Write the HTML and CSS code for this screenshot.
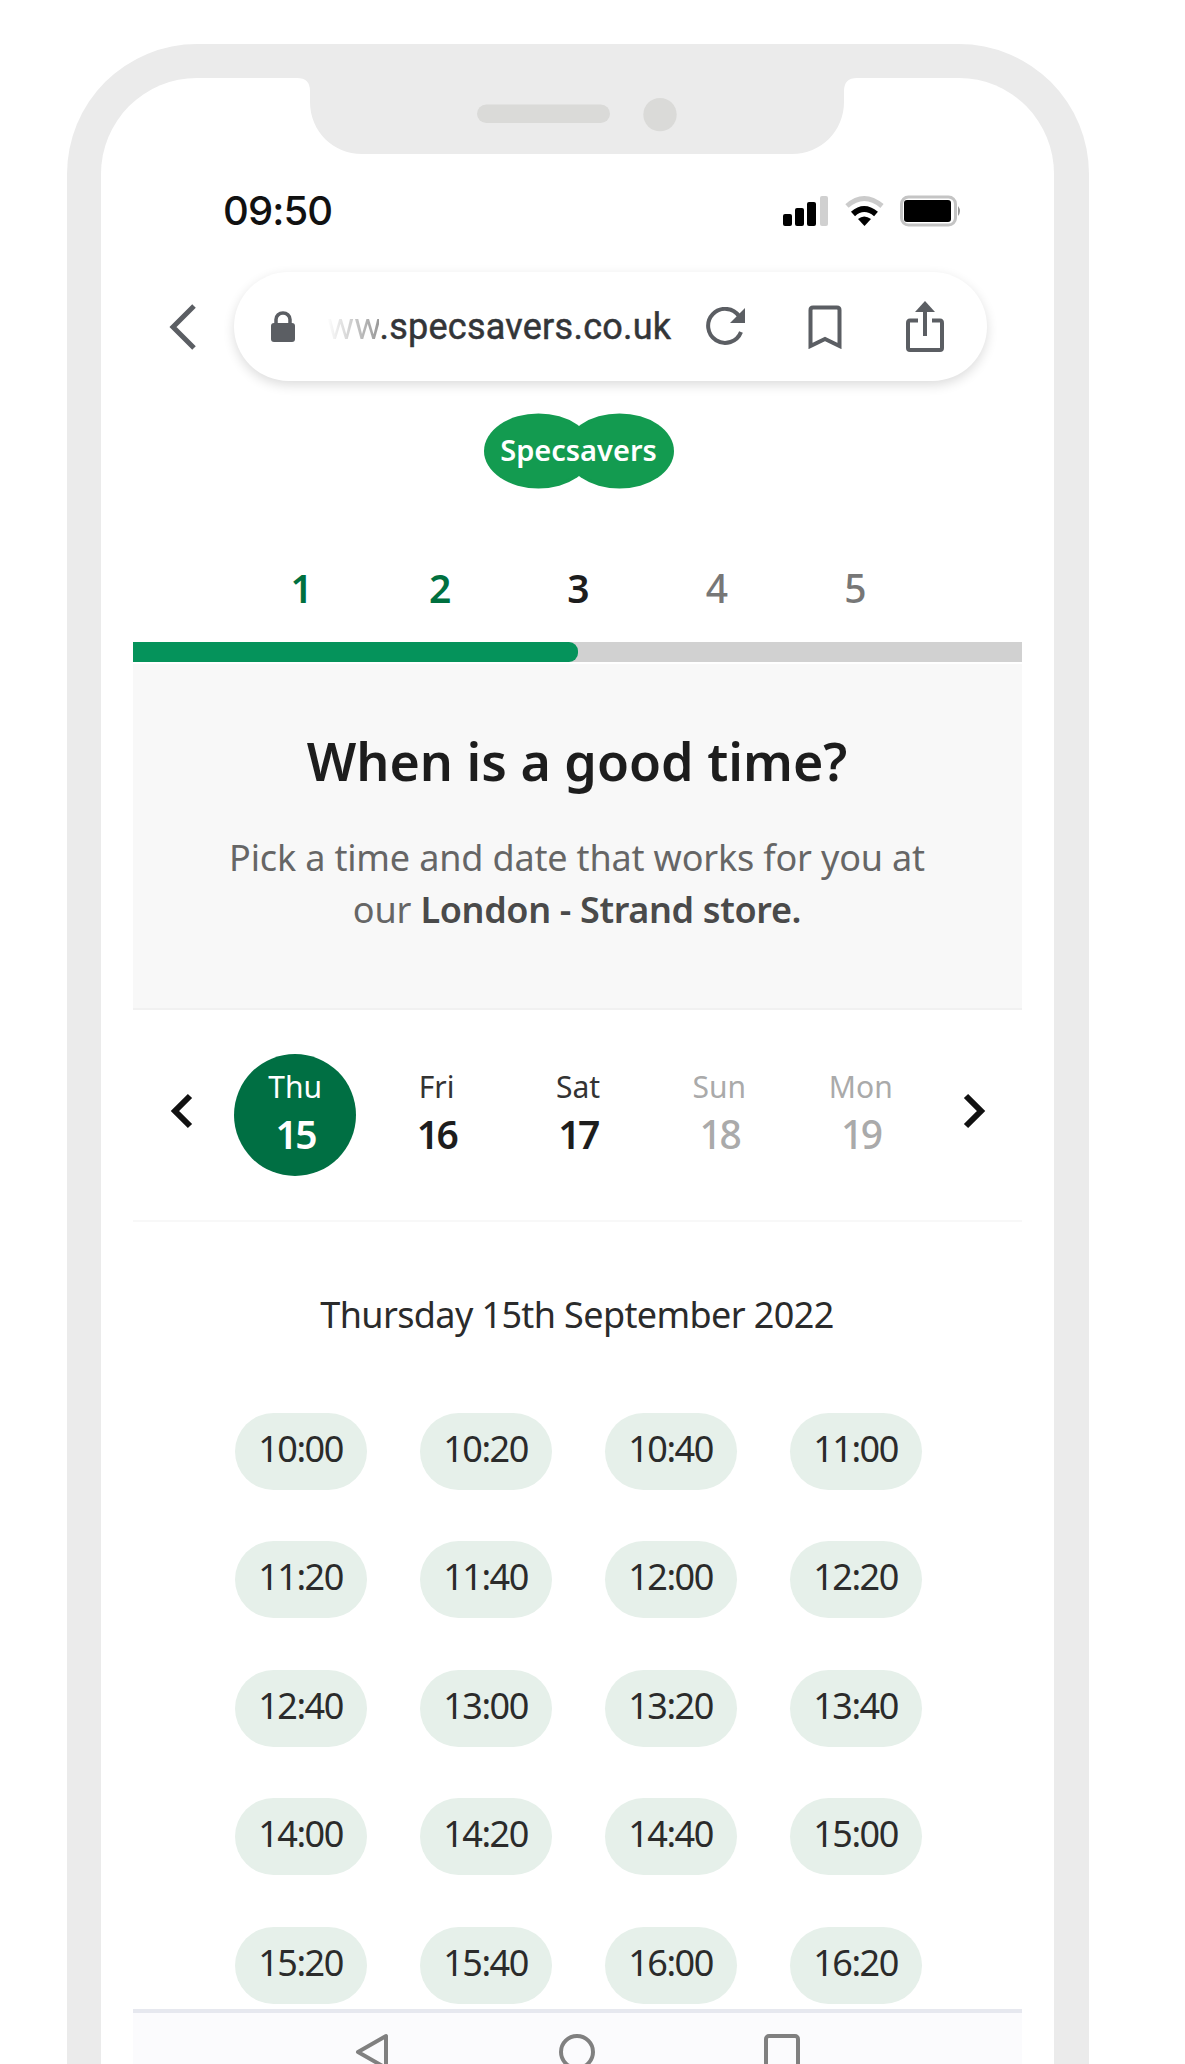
FILE: index.html
```html
<!DOCTYPE html>
<html lang="en">
<head>
<meta charset="utf-8">
<title>Specsavers booking</title>
<link rel="stylesheet" href="styles.css">
</head>
<body>
<main class="phone">
  <svg class="notch" width="560" height="78" viewBox="0 0 560 78" aria-hidden="true">
    <path d="M0 0V1Q13 1 13 14V25C13 54 36 77 65 77H495C524 77 547 54 547 25V14Q547 1 560 1V0Z" fill="#ebebeb"/>
    <rect x="180" y="27.500" width="133" height="18.500" rx="9.200" fill="#dadad8"/>
    <circle cx="363" cy="37.600" r="16.700" fill="#dadad8"/>
  </svg>
  <header class="status">
    <span class="clock">09:50</span>
    <svg class="indicators" width="182" height="36" viewBox="0 0 182 36" aria-hidden="true">
      <rect x="1" y="21" width="9" height="12" rx="2"/>
      <rect x="13" y="15" width="9" height="18" rx="2"/>
      <rect x="25" y="9" width="9" height="24" rx="2"/>
      <rect x="38" y="3" width="8" height="30" rx="2" fill="#d0d0d0"/>
      <g fill="none">
        <path d="M65 13Q82 -2 100 13" stroke="#cbcbcb" stroke-width="5"/>
        <path d="M71 21Q82 11 94 21" stroke="#000" stroke-width="6"/>
      </g>
      <path d="M76 26Q82 21 89 26L82.500 33Z"/>
      <rect x="119.500" y="4" width="54" height="28" rx="7" fill="#fff" stroke="#c4c4c4" stroke-width="3"/>
      <rect x="122" y="7" width="47" height="22" rx="3"/>
      <path d="M176 13Q180 18 176 23Z" fill="#999"/>
    </svg>
  </header>
  <nav class="browser">
    <svg class="back" width="30" height="48" viewBox="0 0 30 48"><path d="M26 3L5 24L26 45" fill="none" stroke="#5b5e63" stroke-width="5"/></svg>
    <div class="address">
      <svg class="lock" width="24" height="32" viewBox="0 0 24 32"><rect x="0" y="12" width="24" height="19" rx="3" fill="#5b5e63"/><path d="M5 13V8.500a7 6.500 0 0 1 14 0V13" fill="none" stroke="#5b5e63" stroke-width="3.500"/></svg>
      <span class="url"><span class="fade">ww</span>.specsavers.co.uk</span>
      <svg class="reload" width="40" height="40" viewBox="0 0 40 40"><path d="M35 25A17 17 0 1 1 33 9" fill="none" stroke="#5b5e63" stroke-width="4"/><path d="M39 1V16H24Z" fill="#5b5e63"/></svg>
      <svg class="bookmark" width="34" height="44" viewBox="0 0 34 44"><path d="M2.500 41V5Q2.500 2.500 5 2.500H29Q31.500 2.500 31.500 5V41L17 34Z" fill="none" stroke="#5b5e63" stroke-width="4"/></svg>
      <svg class="share" width="40" height="52" viewBox="0 0 40 52"><path d="M13 19.500H5Q3 19.500 3 22V47Q3 49 5 49H35Q37 49 37 47V22Q37 19.500 35 19.500H27M20 35V6" fill="none" stroke="#5b5e63" stroke-width="4"/><path d="M20 0L30 11H10Z" fill="#5b5e63"/></svg>
    </div>
  </nav>
  <section class="page">
    <div class="brand"><div class="logo"><svg class="lenses" width="190" height="76" viewBox="0 0 190 76"><ellipse cx="54.500" cy="38" rx="54.500" ry="37.500"/><ellipse cx="135.500" cy="38" rx="54.500" ry="37.500"/><path d="M80 8L95 15L110 8V68L95 61L80 68Z"/></svg><span>Specsavers</span></div></div>
    <ol class="steps"><li class="done">1</li><li class="done">2</li><li class="now">3</li><li>4</li><li>5</li></ol>
    <div class="track"><div class="progress"></div></div>
    <div class="intro">
      <h1>When is a good time?</h1>
      <p>Pick a time and date that works for you at<br>our <b>London - Strand store.</b></p>
    </div>
    <div class="dates">
      <svg class="arrow" width="24" height="36" viewBox="0 0 24 36"><path d="M20 3L5 18L20 33" /></svg>
      <div class="days">
        <div class="day chosen"><span>Thu</span><b>15</b></div>
        <div class="day"><span>Fri</span><b>16</b></div>
        <div class="day"><span>Sat</span><b>17</b></div>
        <div class="day off"><span>Sun</span><b>18</b></div>
        <div class="day off"><span>Mon</span><b>19</b></div>
      </div>
      <svg class="arrow" width="24" height="36" viewBox="0 0 24 36"><path d="M4 3L19 18L4 33" /></svg>
    </div>
    <h2>Thursday 15th September 2022</h2>
    <div class="times">
      <span>10:00</span><span>10:20</span><span>10:40</span><span>11:00</span>
      <span>11:20</span><span>11:40</span><span>12:00</span><span>12:20</span>
      <span>12:40</span><span>13:00</span><span>13:20</span><span>13:40</span>
      <span>14:00</span><span>14:20</span><span>14:40</span><span>15:00</span>
      <span>15:20</span><span>15:40</span><span>16:00</span><span>16:20</span>
    </div>
  </section>
  <footer class="system">
    <svg width="36" height="38" viewBox="0 0 36 38"><path d="M32 3V35L4 19Z"/></svg>
    <svg width="36" height="38" viewBox="0 0 36 38"><circle cx="18" cy="19" r="16"/></svg>
    <svg width="36" height="38" viewBox="0 0 36 38"><rect x="2" y="3" width="32" height="32" rx="3"/></svg>
  </footer>
</main>
</body>
</html>
```
FILE: styles.css
```css
* { box-sizing: border-box; }
body { margin: 0; height: 2064px; padding: 44px 0 0 67px; overflow: hidden; background: #fff; font-family: "Noto Sans", sans-serif; color: #222; }
svg { display: block; flex: none; }
.phone { position: relative; width: 1021.500px; height: 2020px; border: solid #ebebeb; border-width: 34px 35px 0 34.500px; border-radius: 130px 130px 0 0; }
.notch { position: absolute; left: 196px; top: -1px; }
.status { height: 194px; padding: 115px 90px 0 120px; display: flex; justify-content: space-between; align-items: flex-start; }
.clock { font: 500 40px/36px Inter, sans-serif; color: #111; letter-spacing: -0.900px; margin: 0 0 0 2px; }
.browser { height: 109px; padding: 0 67px 0 67px; display: flex; align-items: center; gap: 36px; }
.address { flex: 1; height: 109px; border-radius: 55px; display: flex; align-items: center; padding-left: 37px; box-shadow: 0 4px 12px rgba(0,0,0,.14); }
.url { font: 400 36px/44px Roboto, sans-serif; width: 343px; margin-left: 32px; margin-right: 36px; padding-top: 1px; letter-spacing: .25px; white-space: nowrap; color: #333538; -webkit-text-stroke: .5px; }
.fade { background: linear-gradient(90deg, #fff, #999); background-clip: text; -webkit-background-clip: text; color: transparent; -webkit-text-stroke: 0; }
.bookmark { margin-left: 62px; }
.share { margin-left: 63px; }
.page { width: 889px; margin-left: 31.500px; }
.brand { height: 161px; padding: 32px 0 0 3px; display: flex; justify-content: center; }
.logo { display: grid; place-items: center; width: 190px; height: 76px; }
.logo > * { grid-area: 1 / 1; }
.lenses { fill: #139b50; }
.logo span { z-index: 1; color: #fff; font-size: 29px; font-weight: 600; line-height: 32px; padding-bottom: 2px; }
.steps { list-style: none; margin: 0; height: 100px; padding: 19px 97px 0 100px; display: grid; grid-template-columns: repeat(5, 1fr); text-align: center; font-size: 39px; line-height: 54px; font-weight: 600; color: #777; }
.steps li:not([class]) { font-weight: 500; }
.done { color: #00703f; }
.now { color: #1d1d1d; }
.track { height: 20px; background: #d1d1d1; }
.progress { width: 445.500px; height: 20px; background: #05935b; border-radius: 0 9px 9px 0; }
.intro { height: 348px; padding-top: 67px; background: #f8f8f8; border-bottom: 2px solid #f1f1f1; border-top: 2px solid #fff; text-align: center; }
h1 { font-size: 52px; line-height: 60px; font-weight: 600; margin: 0 0 41px; color: #1d1d1d; }
p { margin: 0; font-size: 36px; line-height: 51.500px; letter-spacing: -.17px; color: #666; white-space: nowrap; }
p b { font-weight: 600; letter-spacing: -.35px; color: #4a4a4a; }
.dates { height: 212px; border-bottom: 2px solid #f8f8f8; display: flex; align-items: center; padding: 0 36px 0 37px; }
.arrow { fill: none; stroke: #111; stroke-width: 6; margin-bottom: 8px; }
.days { flex: 1; padding: 0 30px 0 31px; display: grid; grid-template-columns: repeat(5, 1fr); justify-items: center; }
.day { width: 122px; height: 122px; border-radius: 50%; display: flex; flex-direction: column; align-items: center; padding-top: 13px; font-size: 30px; line-height: 40px; color: #333; }
.day b { font-size: 39px; line-height: 54px; font-weight: 600; letter-spacing: -2.500px; color: #1d1d1d; }
.day.chosen, .day.chosen b { background: #006f43; color: #fff; }
.day.off, .day.off b { color: #aaa; }
.day.off b { font-weight: 500; }
h2 { margin: 0; padding-top: 68px; height: 191px; text-align: center; font-size: 36px; line-height: 50px; font-weight: 400; letter-spacing: -.62px; color: #2b2b2b; }
.times { height: 596px; margin-left: 102px; display: grid; grid-template-columns: repeat(4, 132px); column-gap: 53px; grid-auto-rows: 77px; row-gap: 51.400px; }
.times span { background: #e6f0ea; border-radius: 39px; text-align: center; font-size: 36px; line-height: 72px; letter-spacing: -1.500px; color: #2b2b2b; }
.system { width: 889px; height: 55px; overflow: hidden; margin-left: 31.500px; border-top: 4px solid #e6e8ef; background: #fbfbfd; display: flex; justify-content: center; gap: 169px; padding-top: 20px; }
.system svg { fill: none; stroke: #808080; stroke-width: 4; stroke-linejoin: round; }
```
